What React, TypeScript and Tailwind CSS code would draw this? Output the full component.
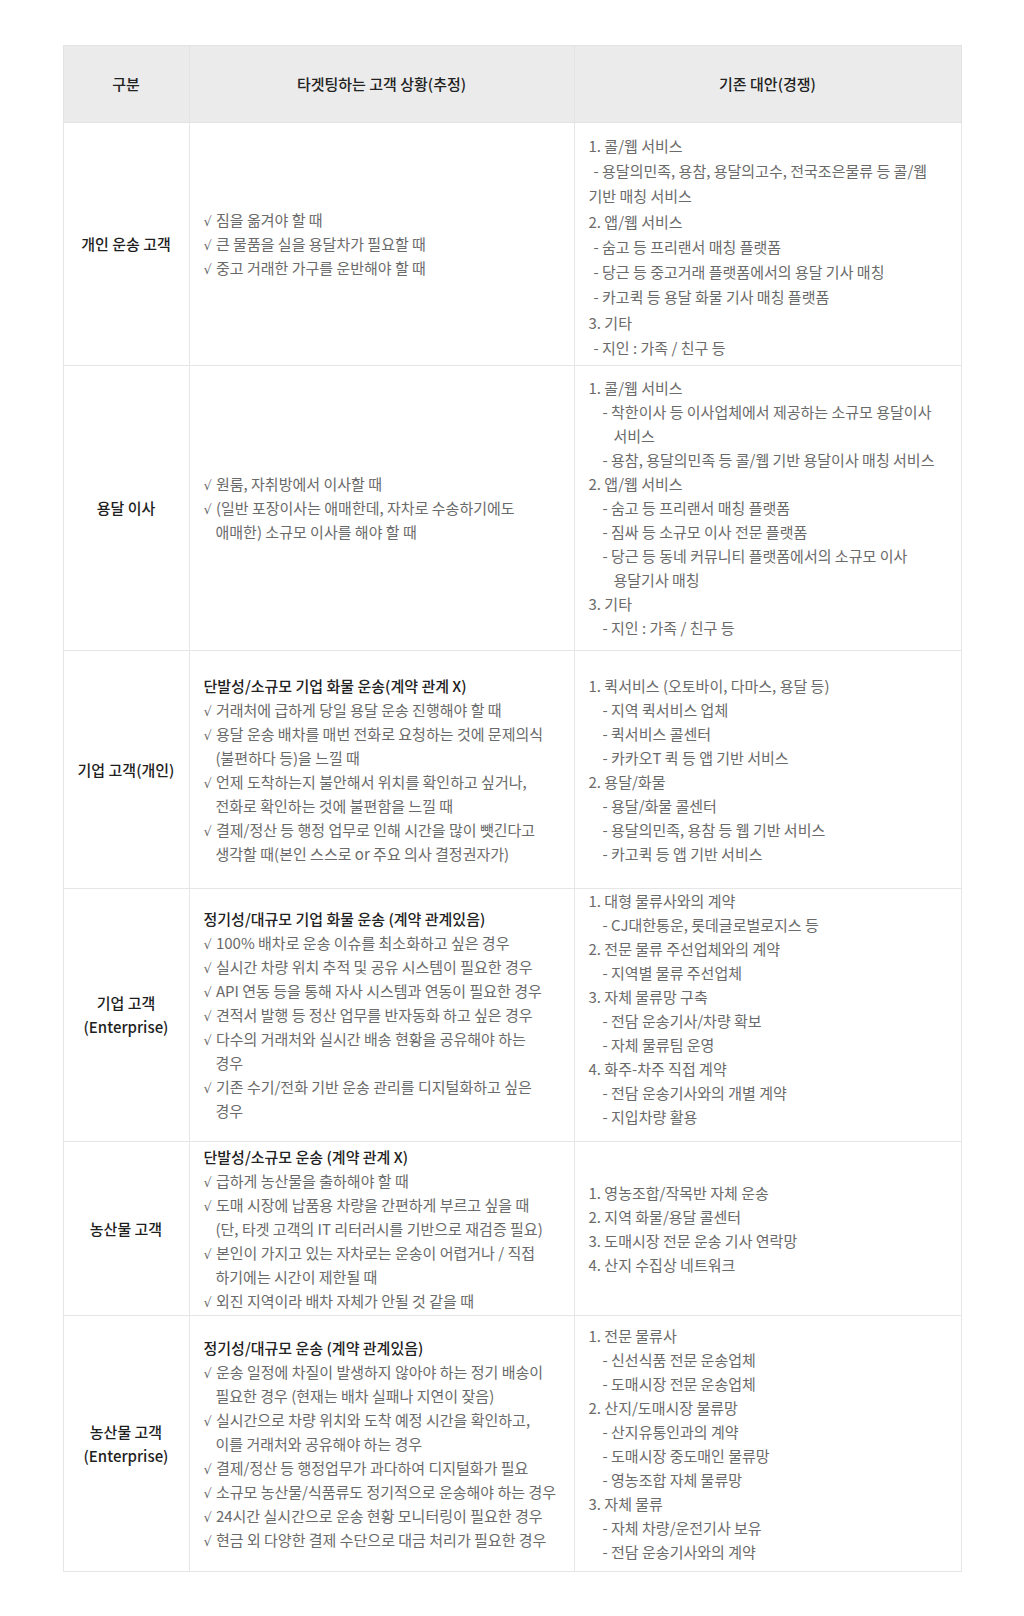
import React from 'react';

type Kind = 'h' | 'c' | 'w' | 'n' | 'd' | 'd1' | 'dw';
type Line = [Kind, string];
type Row = {
  label: string[];
  height: string;
  target: Line[];
  alt: Line[];
  altClass?: string;
};

const ROWS: Row[] = [
{
  label: ['개인 운송 고객'],
  height: 'h-[243px]',
  target: [
  ['c', '짐을 옮겨야 할 때'],
  ['c', '큰 물품을 실을 용달차가 필요할 때'],
  ['c', '중고 거래한 가구를 운반해야 할 때']],

  alt: [
  ['n', '1. 콜/웹 서비스'],
  ['d1', '- 용달의민족, 용참, 용달의고수, 전국조은물류 등 콜/웹'],
  ['n', '기반 매칭 서비스'],
  ['n', '2. 앱/웹 서비스'],
  ['d1', '- 숨고 등 프리랜서 매칭 플랫폼'],
  ['d1', '- 당근 등 중고거래 플랫폼에서의 용달 기사 매칭'],
  ['d1', '- 카고퀵 등 용달 화물 기사 매칭 플랫폼'],
  ['n', '3. 기타'],
  ['d1', '- 지인 : 가족 / 친구 등']],

  altClass: 'leading-[25.25px] pt-[5px]'
},
{
  label: ['용달 이사'],
  height: 'h-[285px]',
  target: [
  ['c', '원룸, 자취방에서 이사할 때'],
  ['c', '(일반 포장이사는 애매한데, 자차로 수송하기에도'],
  ['w', '애매한) 소규모 이사를 해야 할 때']],

  alt: [
  ['n', '1. 콜/웹 서비스'],
  ['d', '- 착한이사 등 이사업체에서 제공하는 소규모 용달이사'],
  ['dw', '서비스'],
  ['d', '- 용참, 용달의민족 등 콜/웹 기반 용달이사 매칭 서비스'],
  ['n', '2. 앱/웹 서비스'],
  ['d', '- 숨고 등 프리랜서 매칭 플랫폼'],
  ['d', '- 짐싸 등 소규모 이사 전문 플랫폼'],
  ['d', '- 당근 등 동네 커뮤니티 플랫폼에서의 소규모 이사'],
  ['dw', '용달기사 매칭'],
  ['n', '3. 기타'],
  ['d', '- 지인 : 가족 / 친구 등']]

},
{
  label: ['기업 고객(개인)'],
  height: 'h-[238px]',
  target: [
  ['h', '단발성/소규모 기업 화물 운송(계약 관계 X)'],
  ['c', '거래처에 급하게 당일 용달 운송 진행해야 할 때'],
  ['c', '용달 운송 배차를 매번 전화로 요청하는 것에 문제의식'],
  ['w', '(불편하다 등)을 느낄 때'],
  ['c', '언제 도착하는지 불안해서 위치를 확인하고 싶거나,'],
  ['w', '전화로 확인하는 것에 불편함을 느낄 때'],
  ['c', '결제/정산 등 행정 업무로 인해 시간을 많이 뺏긴다고'],
  ['w', '생각할 때(본인 스스로 or 주요 의사 결정권자가)']],

  alt: [
  ['n', '1. 퀵서비스 (오토바이, 다마스, 용달 등)'],
  ['d', '- 지역 퀵서비스 업체'],
  ['d', '- 퀵서비스 콜센터'],
  ['d', '- 카카오T 퀵 등 앱 기반 서비스'],
  ['n', '2. 용달/화물'],
  ['d', '- 용달/화물 콜센터'],
  ['d', '- 용달의민족, 용참 등 웹 기반 서비스'],
  ['d', '- 카고퀵 등 앱 기반 서비스']]

},
{
  label: ['기업 고객', '(Enterprise)'],
  height: 'h-[253px]',
  target: [
  ['h', '정기성/대규모 기업 화물 운송 (계약 관계있음)'],
  ['c', '100% 배차로 운송 이슈를 최소화하고 싶은 경우'],
  ['c', '실시간 차량 위치 추적 및 공유 시스템이 필요한 경우'],
  ['c', 'API 연동 등을 통해 자사 시스템과 연동이 필요한 경우'],
  ['c', '견적서 발행 등 정산 업무를 반자동화 하고 싶은 경우'],
  ['c', '다수의 거래처와 실시간 배송 현황을 공유해야 하는'],
  ['w', '경우'],
  ['c', '기존 수기/전화 기반 운송 관리를 디지털화하고 싶은'],
  ['w', '경우']],

  alt: [
  ['n', '1. 대형 물류사와의 계약'],
  ['d', '- CJ대한통운, 롯데글로벌로지스 등'],
  ['n', '2. 전문 물류 주선업체와의 계약'],
  ['d', '- 지역별 물류 주선업체'],
  ['n', '3. 자체 물류망 구축'],
  ['d', '- 전담 운송기사/차량 확보'],
  ['d', '- 자체 물류팀 운영'],
  ['n', '4. 화주-차주 직접 계약'],
  ['d', '- 전담 운송기사와의 개별 계약'],
  ['d', '- 지입차량 활용']],

  altClass: 'pb-[12px]'
},
{
  label: ['농산물 고객'],
  height: 'h-[174px]',
  target: [
  ['h', '단발성/소규모 운송 (계약 관계 X)'],
  ['c', '급하게 농산물을 출하해야 할 때'],
  ['c', '도매 시장에 납품용 차량을 간편하게 부르고 싶을 때'],
  ['w', '(단, 타겟 고객의 IT 리터러시를 기반으로 재검증 필요)'],
  ['c', '본인이 가지고 있는 자차로는 운송이 어렵거나 / 직접'],
  ['w', '하기에는 시간이 제한될 때'],
  ['c', '외진 지역이라 배차 자체가 안될 것 같을 때']],

  alt: [
  ['n', '1. 영농조합/작목반 자체 운송'],
  ['n', '2. 지역 화물/용달 콜센터'],
  ['n', '3. 도매시장 전문 운송 기사 연락망'],
  ['n', '4. 산지 수집상 네트워크']]

},
{
  label: ['농산물 고객', '(Enterprise)'],
  height: 'h-[256px]',
  target: [
  ['h', '정기성/대규모 운송 (계약 관계있음)'],
  ['c', '운송 일정에 차질이 발생하지 않아야 하는 정기 배송이'],
  ['w', '필요한 경우 (현재는 배차 실패나 지연이 잦음)'],
  ['c', '실시간으로 차량 위치와 도착 예정 시간을 확인하고,'],
  ['w', '이를 거래처와 공유해야 하는 경우'],
  ['c', '결제/정산 등 행정업무가 과다하여 디지털화가 필요'],
  ['c', '소규모 농산물/식품류도 정기적으로 운송해야 하는 경우'],
  ['c', '24시간 실시간으로 운송 현황 모니터링이 필요한 경우'],
  ['c', '현금 외 다양한 결제 수단으로 대금 처리가 필요한 경우']],

  alt: [
  ['n', '1. 전문 물류사'],
  ['d', '- 신선식품 전문 운송업체'],
  ['d', '- 도매시장 전문 운송업체'],
  ['n', '2. 산지/도매시장 물류망'],
  ['d', '- 산지유통인과의 계약'],
  ['d', '- 도매시장 중도매인 물류망'],
  ['d', '- 영농조합 자체 물류망'],
  ['n', '3. 자체 물류'],
  ['d', '- 자체 차량/운전기사 보유'],
  ['d', '- 전담 운송기사와의 계약']]

}];


const KIND_CLASS: Record<Kind, string> = {
  h: 'font-medium text-[#222]',
  c: '',
  w: 'pl-[12px]',
  n: '',
  d: 'pl-[14px]',
  d1: 'pl-[5px]',
  dw: 'pl-[25px]'
};

function Lines({ lines }: {lines: Line[];}) {
  return (
    <>
      {lines.map(([k, t], i) =>
      <div key={i} className={`whitespace-nowrap ${KIND_CLASS[k]}`}>
          {k === 'c' &&
        <span className="font-['DejaVu_Sans',sans-serif] text-[13px] leading-none">√ </span>
        }
          {t}
        </div>
      )}
    </>);

}

export default function App() {
  return (
    <div className="min-h-[1616px] bg-white pt-[45px] font-['Noto_Sans_CJK_KR','Noto_Sans',sans-serif] text-[15px]">
      <table className="mx-auto w-[898px] table-fixed border-collapse">
        <colgroup>
          <col className="w-[126px]" />
          <col className="w-[385px]" />
          <col className="w-[387px]" />
        </colgroup>
        <thead>
          <tr className="h-[77px] bg-[#ebebeb] text-[#222]">
            <th className="border border-[#e3e3e3] font-medium">구분</th>
            <th className="border border-[#e3e3e3] font-medium">타겟팅하는 고객 상황(추정)</th>
            <th className="border border-[#e3e3e3] font-medium">기존 대안(경쟁)</th>
          </tr>
        </thead>
        <tbody>
          {ROWS.map((r, idx) =>
          <tr key={idx} className={r.height}>
              <td className="border border-[#e6e6e6] text-center align-middle font-medium text-[#1e1e1e] leading-6">
                {r.label.map((l) =>
              <div key={l}>{l}</div>
              )}
              </td>
              <td className="border border-[#e6e6e6] px-[14px] align-middle text-[#6a6a6a] leading-6">
                <Lines lines={r.target} />
              </td>
              <td className={`border border-[#e6e6e6] px-[14px] align-middle text-[#6a6a6a] leading-6 ${r.altClass ?? ''}`}>
                <Lines lines={r.alt} />
              </td>
            </tr>
          )}
        </tbody>
      </table>
    </div>);

}
